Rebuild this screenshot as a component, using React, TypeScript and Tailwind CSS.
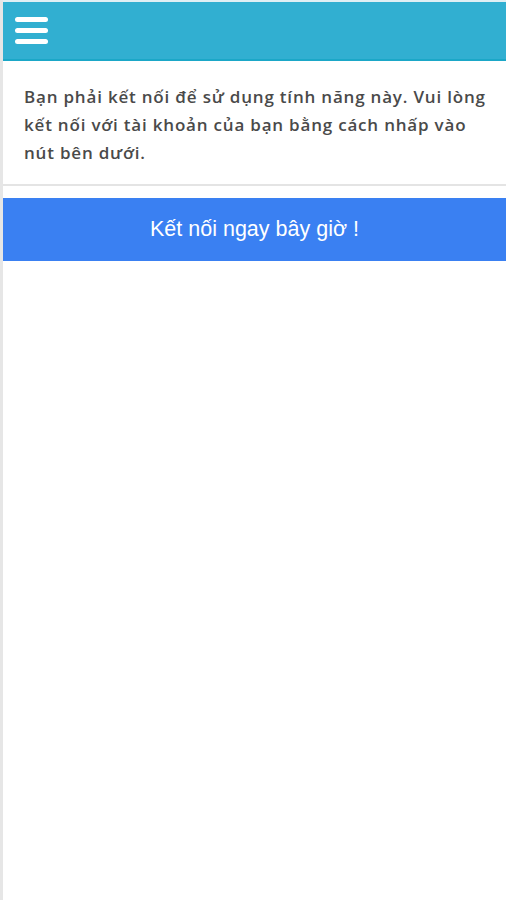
import React from 'react';

const App: React.FC = () => {
    return (
        <div className="w-[506px] h-[900px] bg-white border-l-[3px] border-[#e6e6e6] flex flex-col" style={{ fontFamily: '"Liberation Sans", Arial, sans-serif' }}>
            <header className="h-[61px] bg-[#31afd1] border-t-2 border-[#dfeff4] border-b-2 border-b-[#1ba7c7] flex items-center pl-[12px]">
                <div className="flex flex-col gap-[6px]">
                    <span className="block w-[33px] h-[5px] rounded-full bg-white" />
                    <span className="block w-[33px] h-[5px] rounded-full bg-white" />
                    <span className="block w-[33px] h-[5px] rounded-full bg-white" />
                </div>
            </header>
            <div className="pl-[21px] pr-[14px] pt-[22px] pb-[17px] border-b-2 border-[#e4e4e4]">
                <p className="text-[17px] leading-[28px] font-semibold tracking-[0.8px] text-[#4a4a4a] font-['Open_Sans',sans-serif]">
                    Bạn phải kết nối để sử dụng tính năng này. Vui lòng kết nối với tài khoản của bạn bằng cách nhấp vào nút bên dưới.
                </p>
            </div>
            <button className="mt-[12px] h-[63px] w-full bg-[#3a80f2] text-white text-[21.5px] flex items-center justify-center">
                Kết nối ngay bây giờ !
            </button>
        </div>
    );
};

export default App;
